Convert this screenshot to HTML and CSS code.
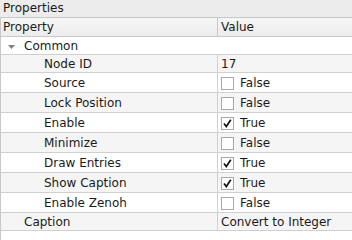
FILE: index.html
```html
<!DOCTYPE html>
<html lang="en">
<head>
    <meta charset="UTF-8">
    <title>Properties</title>
    <link rel="stylesheet" href="styles.css">
</head>
<body>
    <div class="panel">
        <div class="panel-title">Properties</div>
        <div class="tree">
            <div class="header">
                <div class="cell name">Property</div>
                <div class="cell value">Value</div>
            </div>

            <div class="group">
                <svg class="arrow" width="7" height="4" viewBox="0 0 7 4"><path d="M0 0 H7 L3.5 4 Z" fill="#808080"/></svg>
                Common
            </div>

            <div class="row alt">
                <div class="cell name child">Node ID</div>
                <div class="cell value">17</div>
            </div>
            <div class="row check">
                <div class="cell name child">Source</div>
                <div class="cell value"><span class="box"></span>False</div>
            </div>
            <div class="row check alt">
                <div class="cell name child">Lock Position</div>
                <div class="cell value"><span class="box"></span>False</div>
            </div>
            <div class="row check">
                <div class="cell name child">Enable</div>
                <div class="cell value"><span class="box checked"><svg width="11" height="11" viewBox="0 0 11 11"><path d="M2 5.5 L4.3 8.5 L8.8 1.8" fill="none" stroke="#111" stroke-width="1.7"/></svg></span>True</div>
            </div>
            <div class="row check alt">
                <div class="cell name child">Minimize</div>
                <div class="cell value"><span class="box"></span>False</div>
            </div>
            <div class="row check">
                <div class="cell name child">Draw Entries</div>
                <div class="cell value"><span class="box checked"><svg width="11" height="11" viewBox="0 0 11 11"><path d="M2 5.5 L4.3 8.5 L8.8 1.8" fill="none" stroke="#111" stroke-width="1.7"/></svg></span>True</div>
            </div>
            <div class="row check alt">
                <div class="cell name child">Show Caption</div>
                <div class="cell value"><span class="box checked"><svg width="11" height="11" viewBox="0 0 11 11"><path d="M2 5.5 L4.3 8.5 L8.8 1.8" fill="none" stroke="#111" stroke-width="1.7"/></svg></span>True</div>
            </div>
            <div class="row check">
                <div class="cell name child">Enable Zenoh</div>
                <div class="cell value"><span class="box"></span>False</div>
            </div>
            <div class="row alt">
                <div class="cell name top">Caption</div>
                <div class="cell value">Convert to Integer</div>
            </div>
        </div>
    </div>
</body>
</html>
```

FILE: styles.css
```css
body {
    margin: 0;
    background-color: #ffffff;
    font-family: "DejaVu Sans", sans-serif;
    font-size: 12px;
    color: #1a1a1a;
}

.panel {
    width: 352px;
    height: 240px;
    display: flex;
    flex-direction: column;
}

.panel-title {
    height: 17px;
    line-height: 16px;
    padding-left: 3px;
    background-color: #ececec;
}

.tree {
    flex: 1;
    border-left: 1px solid #c8c8c8;
    background-color: #ffffff;
}

.header {
    display: grid;
    grid-template-columns: 217px 1fr;
    height: 20px;
    box-sizing: border-box;
    border-top: 1px solid #c8c8c8;
    border-bottom: 1px solid #c8c8c8;
    background: linear-gradient(#f6f6f6, #ededed);
    line-height: 18px;
}

.header .name {
    padding-left: 2px;
}

.row {
    display: grid;
    grid-template-columns: 217px 1fr;
    height: 18px;
    box-sizing: border-box;
    border-bottom: 1px solid #d0d0d0;
    padding-top: 1px;
    line-height: 16px;
}

.row.check {
    height: 20px;
    line-height: 18px;
}

.row.alt {
    background-color: #f5f5f5;
}

.cell.name {
    border-right: 1px solid #d0d0d0;
    margin-top: -1px;
    padding-top: 1px;
}

.header .cell.name {
    border-right-color: #c8c8c8;
    margin-top: 0;
    padding-top: 0;
}

.cell.value {
    padding-left: 3px;
    display: flex;
    align-items: center;
}

.child {
    padding-left: 43px;
}

.top {
    padding-left: 23px;
}

.group {
    height: 18px;
    box-sizing: border-box;
    border-bottom: 1px solid #d0d0d0;
    padding-top: 1px;
    line-height: 16px;
    padding-left: 23px;
    position: relative;
}

.arrow {
    position: absolute;
    left: 7px;
    top: 8px;
}

.box {
    width: 13px;
    height: 13px;
    box-sizing: border-box;
    border: 1px solid #a8a8a8;
    background-color: #ffffff;
    margin-right: 6px;
    display: flex;
    align-items: center;
    justify-content: center;
}
```
